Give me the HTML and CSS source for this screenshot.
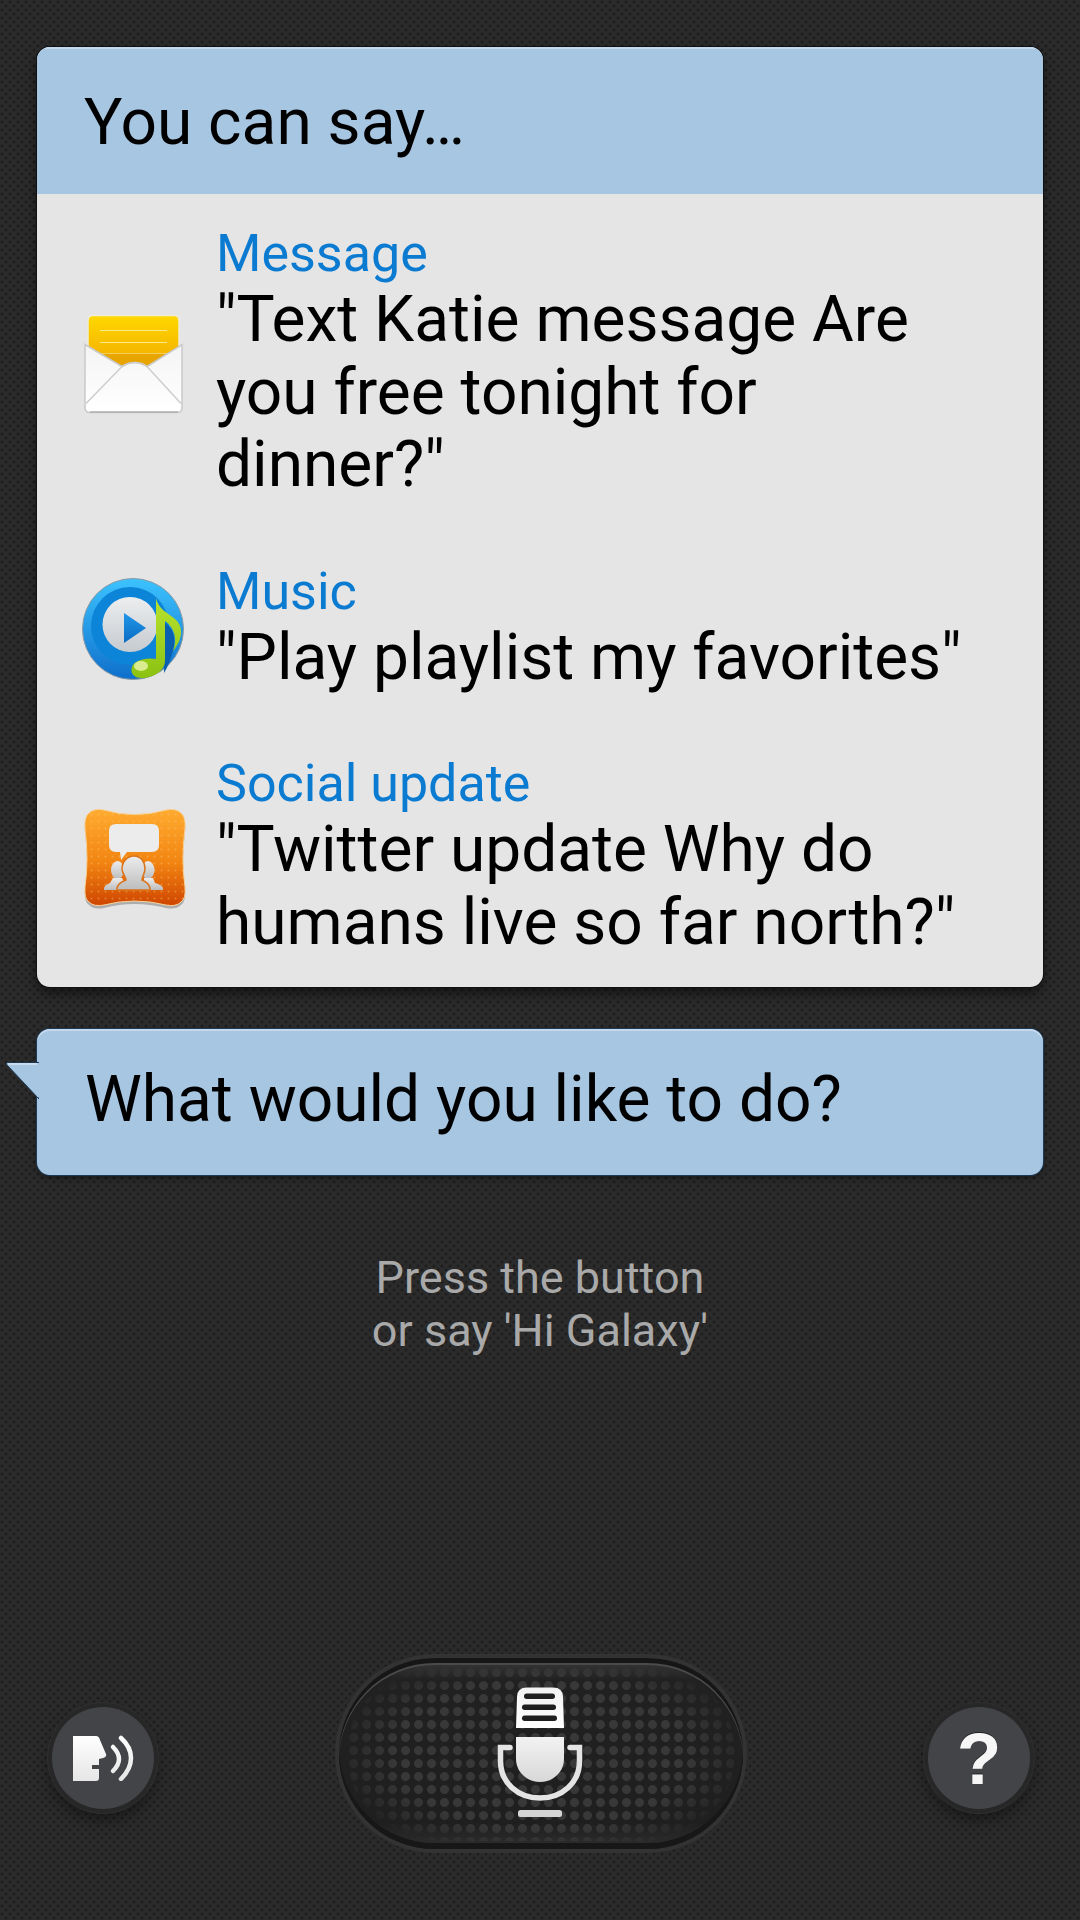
FILE: index.html
```html
<!DOCTYPE html>
<html lang="en">
<head>
<meta charset="utf-8">
<title>Voice assistant</title>
<link rel="stylesheet" href="styles.css">
</head>
<body>
<main class="screen">
  <section class="card">
    <h1 class="card-title">You can say…</h1>
    <ul class="examples">
      <li class="example">
        <svg class="app-icon" viewBox="0 -3.500 150 150">
          <defs>
            <linearGradient id="noteFill" x1="0" y1="0" x2="0" y2="1"><stop offset="0" stop-color="#ffd800"/><stop offset="1" stop-color="#f0a400"/></linearGradient>
            <linearGradient id="envFill" x1="0" y1="0" x2="0" y2="1"><stop offset="0" stop-color="#f4f4f4"/><stop offset="1" stop-color="#ffffff"/></linearGradient>
          </defs>
          <path d="M28 55V29q0-5 5-5h81q5 0 5 5v31l-24 22H50z" fill="url(#noteFill)" stroke="#f1ecd8" stroke-width="1.500"/>
          <path d="M40 39h67M40 51h67M40 62h67" stroke="#ffe98a" stroke-width="1" fill="none"/>
          <path d="M40 62l22 13q13-8 25 0l20-13" fill="#e2a000" opacity=".7"/>
          <path d="M25 53l37 22q13-8 25 0l35-22v63q0 5-5 5H30q-5 0-5-5z" fill="url(#envFill)" stroke="#c9c9c9" stroke-width="1.500"/>
          <path d="M26 112l36-37q13-8 25 0l34 37" fill="none" stroke="#cdcdcd" stroke-width="1.500"/>
          <path d="M30 120.500h88" stroke="#aeaeae" stroke-width="1.500"/>
        </svg>
        <div class="example-text">
          <div class="app-name">Message</div>
          <p class="phrase">"Text Katie message Are you free tonight for dinner?"</p>
        </div>
      </li>
      <li class="example">
        <svg class="app-icon" viewBox="0 -8 150 150">
          <defs>
            <linearGradient id="ringFill" x1="0" y1="0" x2="0" y2="1"><stop offset="0" stop-color="#3cc3ff"/><stop offset="1" stop-color="#0f6fcb"/></linearGradient>
            <linearGradient id="discFill" x1="0" y1="0" x2="0" y2="1"><stop offset="0" stop-color="#eceeef"/><stop offset="1" stop-color="#c6cbd0"/></linearGradient>
            <linearGradient id="playFill" x1="0" y1="0" x2="0" y2="1"><stop offset="0" stop-color="#2196e8"/><stop offset="1" stop-color="#0a6cc4"/></linearGradient>
            <linearGradient id="noteGreen" x1="0" y1="0" x2="0" y2="1"><stop offset="0" stop-color="#b8e22e"/><stop offset="1" stop-color="#8cc212"/></linearGradient>
          </defs>
          <circle cx="73" cy="68" r="50.500" fill="url(#ringFill)" stroke="#8d9aa3" stroke-width="1"/>
          <circle cx="70" cy="65" r="39" fill="#0c84d8"/>
          <circle cx="70" cy="63.500" r="27.500" fill="url(#discFill)"/>
          <path d="M64 52l22 15-22 15z" fill="url(#playFill)"/>
          <path d="M105 62q13 8 8 28q-4 14-9 22z" fill="#0a5fae"/>
          <path d="M96 37C98 48 108 52 115 58C122 64 125 76 113 90C118 78 114 66 105 60L105 100C105 108 96 116 84 117C74 118 70 112 72 106C74 100 84 96 96 98z" fill="url(#noteGreen)"/>
          <ellipse cx="81" cy="105" rx="7" ry="5" fill="#e5f3a6" opacity=".85"/>
        </svg>
        <div class="example-text">
          <div class="app-name">Music</div>
          <p class="phrase">"Play playlist my favorites"</p>
        </div>
      </li>
      <li class="example">
        <svg class="app-icon" viewBox="0 -1 150 150">
          <defs>
            <linearGradient id="tileFill" x1="0" y1="0" x2="0" y2="1"><stop offset="0" stop-color="#ffab30"/><stop offset=".55" stop-color="#f28512"/><stop offset="1" stop-color="#cf4500"/></linearGradient>
            <linearGradient id="crowdFill" x1="0" y1="0" x2="0" y2="1"><stop offset="0" stop-color="#ececec"/><stop offset="1" stop-color="#bdbdbd"/></linearGradient>
            <pattern id="tileDots" width="7" height="7" patternUnits="userSpaceOnUse"><circle cx="3.500" cy="3.500" r="1" fill="#ffc876" opacity=".4"/></pattern>
          </defs>
          <path d="M25 46q-1-12 4-16 5-5 15-3 30 9 62 0 10-2 15 3 5 4 4 16-4 30 0 58 1 12-4 15-5 5-15 3-32-8-62 0-10 2-15-3-5-3-4-15 4-28 0-58z" fill="#5a5a5a" opacity=".4" transform="translate(0 3)"/>
          <path d="M25 46q-1-12 4-16 5-5 15-3 30 9 62 0 10-2 15 3 5 4 4 16-4 30 0 58 1 12-4 15-5 5-15 3-32-8-62 0-10 2-15-3-5-3-4-15 4-28 0-58z" fill="url(#tileFill)" stroke="#f7d29a" stroke-width="1"/>
          <path d="M25 46q-1-12 4-16 5-5 15-3 30 9 62 0 10-2 15 3 5 4 4 16-4 30 0 58 1 12-4 15-5 5-15 3-32-8-62 0-10 2-15-3-5-3-4-15 4-28 0-58z" fill="url(#tileDots)"/>
          <path d="M56 41h36q7 0 7 7v14q0 7-7 7H67l-6 8-1-8h-4q-7 0-7-7V48q0-7 7-7z" fill="#ececec"/>
          <ellipse cx="57.500" cy="87" rx="6.500" ry="9" fill="url(#crowdFill)"/>
          <path d="M53 95h9l2 4v8H44v-2q1-3 6-5z" fill="url(#crowdFill)"/>
          <ellipse cx="88" cy="87" rx="6.500" ry="9" fill="url(#crowdFill)"/>
          <path d="M84 95h9l2 5q7 2 8 5v2H84z" fill="url(#crowdFill)"/>
          <path d="M74 73c7 0 11 6 11 13 0 4-3 8-3 11q7 3 8 8v2H57v-2q1-5 9-8c0-3-4-7-4-11 0-7 5-13 12-13z" fill="url(#crowdFill)" stroke="#d9741a" stroke-width="1.500"/>
        </svg>
        <div class="example-text">
          <div class="app-name">Social update</div>
          <p class="phrase">"Twitter update Why do humans live so far north?"</p>
        </div>
      </li>
    </ul>
  </section>

  <section class="bubble">
    <svg class="bubble-tail" viewBox="0 0 36 40">
      <path d="M36 .5H5Q2 .5 4.500 3.500L36 37z" fill="#a7c6e2" stroke="#1d3a55" stroke-width="1"/>
      <path d="M36 2H5" stroke="#c9dcee" stroke-width="2"/>
      <path d="M34 1h3v34h-3z" fill="#a7c6e2"/>
    </svg>
    <p class="bubble-text">What would you like to do?</p>
  </section>

  <p class="hint">Press the button<br>or say 'Hi Galaxy'</p>

  <footer class="controls">
    <button class="round-button" type="button" aria-label="Voice output">
      <svg class="speak-icon" viewBox="0 0 62 46">
        <defs><linearGradient id="glyphFill" gradientUnits="userSpaceOnUse" x1="0" y1="0" x2="0" y2="46"><stop offset="0" stop-color="#ffffff"/><stop offset="1" stop-color="#e6e6e6"/></linearGradient></defs>
        <path d="M0 1H23Q26 1 27 5L33 19Q34 22 30 23L26 24V30H19V34H26V43Q26 46 23 46H0z" fill="url(#glyphFill)"/>
        <path d="M40 12Q46 18 46 24Q46 30 40 36" fill="none" stroke="url(#glyphFill)" stroke-width="4.500" stroke-linecap="round"/>
        <path d="M48 3Q58 12 58 23Q58 34 48 44" fill="none" stroke="url(#glyphFill)" stroke-width="4.500" stroke-linecap="round"/>
      </svg>
    </button>
    <button class="mic-button" type="button" aria-label="Speak">
      <span class="mic-dots"></span>
      <svg class="mic-icon" viewBox="0 0 88 134">
        <defs>
          <linearGradient id="micTop" x1="0" y1="0" x2="0" y2="1"><stop offset="0" stop-color="#f2f2f2"/><stop offset="1" stop-color="#ffffff"/></linearGradient>
          <linearGradient id="micBody" x1="0" y1="0" x2="0" y2="1"><stop offset="0" stop-color="#f2f2f2"/><stop offset="1" stop-color="#d8d8d8"/></linearGradient>
        </defs>
        <path d="M20 41L21 10Q21 .5 31 .5H57Q67 .5 67 10L68 41z" fill="url(#micTop)"/>
        <g fill="#1f1f1f">
          <rect x="28" y="6.500" width="31" height="5.500" rx="2.700"/>
          <rect x="26" y="17.500" width="34" height="5.500" rx="2.700"/>
          <rect x="26" y="28.500" width="35" height="5.500" rx="2.700"/>
        </g>
        <path d="M20 50H68V72C68 85 57 95 44 95S20 85 20 72z" fill="url(#micBody)"/>
        <path d="M14 60.500H4.500V74C4.500 96 22 111 44 111S83.500 96 83.500 74V60.500H74" fill="none" stroke="#e4e4e4" stroke-width="5.500" stroke-linecap="round"/>
        <rect x="22" y="123" width="44" height="7" rx="2.500" fill="#d4d4d4"/>
      </svg>
    </button>
    <button class="round-button" type="button" aria-label="Help">
      <span class="help-mark">?</span>
    </button>
  </footer>
</main>
</body>
</html>
```
FILE: styles.css
```css
* { box-sizing: border-box; }

html, body { margin: 0; padding: 0; }

body {
  width: 1080px;
  height: 1920px;
  overflow: hidden;
  font-family: Roboto, "Liberation Sans", sans-serif;
  color: #000;
  background-color: #2b2b2b;
  background-image:
    radial-gradient(circle at 2px 2px, #1e1e1e 0, #1e1e1e 1px, transparent 2px),
    radial-gradient(circle at 6px 6px, #1e1e1e 0, #1e1e1e 1px, transparent 2px);
  background-size: 8px 8px;
}

.screen {
  height: 1920px;
  display: flex;
  flex-direction: column;
  padding: 47px 37px 71px;
}

.card {
  border-radius: 13px;
  overflow: hidden;
  background: #e5e5e5;
  box-shadow: 0 0 0 1px #111, 0 6px 12px rgba(0, 0, 0, .55);
}

.card-title {
  height: 147px;
  margin: 0;
  padding: 3px 47px 0;
  display: flex;
  align-items: center;
  font-size: 64px;
  font-weight: 400;
  background: #a7c6e2;
  box-shadow: inset 0 2px 0 #c6d9ec;
}

.examples {
  list-style: none;
  margin: 0;
  padding: 30px 0 28px;
  display: flex;
  flex-direction: column;
  gap: 60px;
}

.example {
  display: flex;
  align-items: center;
  padding: 0 60px 0 23px;
}

.app-icon {
  flex: none;
  width: 150px;
  height: 150px;
  margin: -20px 6px -20px 0;
}

.example-text { min-width: 0; }

.app-name {
  font-size: 52px;
  line-height: 60px;
  color: #0a7bd1;
}

.phrase {
  margin: 0;
  font-size: 64px;
  line-height: 72.5px;
}

.bubble {
  position: relative;
  height: 146px;
  margin-top: 42px;
  padding: 0 48px 5px;
  display: flex;
  align-items: center;
  border-radius: 13px;
  background: #a7c6e2;
  box-shadow: 0 0 0 1px #1d3a55, inset 0 2px 0 #c6d9ec, 0 3px 6px rgba(0, 0, 0, .4);
}

.bubble-tail {
  position: absolute;
  left: -34px;
  top: 33px;
  width: 36px;
  height: 40px;
}

.bubble-text {
  margin: 0;
  font-size: 64px;
}

.hint {
  margin: 76px 0 0;
  text-align: center;
  font-size: 45px;
  line-height: 53px;
  color: #a9a9a9;
}

.controls {
  margin-top: auto;
  display: flex;
  align-items: center;
  justify-content: space-between;
  padding: 0 13px 0 15px;
}

.round-button {
  position: relative;
  width: 102px;
  height: 102px;
  margin-top: 9px;
  padding: 0;
  border: 0;
  border-radius: 50%;
  display: flex;
  align-items: center;
  justify-content: center;
  background: #424448;
  box-shadow:
    0 0 0 4px #272727,
    0 0 0 5px #303030,
    0 8px 14px 3px rgba(0, 0, 0, .4);
}

.speak-icon {
  width: 62px;
  height: 46px;
  margin-left: 2px;
}

.help-mark {
  font-family: "Liberation Sans", Arial, sans-serif;
  font-size: 73px;
  font-weight: 700;
  line-height: 1;
  color: #f6f6f6;
  text-shadow: 0 -1px 0 #222;
}

.mic-button {
  position: relative;
  width: 404px;
  height: 191px;
  padding: 0;
  border: 0;
  border-radius: 96px;
  display: flex;
  align-items: center;
  justify-content: center;
  background: linear-gradient(#3a3a3a 0, #212121 22px, #1f1f1f 165px, #2a2a2a 184px);
  box-shadow:
    0 0 0 4px #333,
    inset 0 5px 0 #161616,
    inset 0 -6px 0 #171717,
    inset 0 7px 0 #4a4a4a;
}

/* speaker-grille dots, fading out toward the rim */
.mic-dots {
  position: absolute;
  inset: 8px;
  border-radius: 90px;
  background-image: radial-gradient(circle at 6.500px 6.500px, #383838 0, #383838 4px, transparent 5px);
  background-size: 13px 13px;
  -webkit-mask-image: radial-gradient(ellipse 54% 62% at 50% 50%, #000 70%, rgba(0, 0, 0, .4) 92%, transparent 100%);
  mask-image: radial-gradient(ellipse 54% 62% at 50% 50%, #000 70%, rgba(0, 0, 0, .4) 92%, transparent 100%);
}

.mic-icon {
  position: relative;
  width: 88px;
  height: 134px;
  left: -1px;
}
```
